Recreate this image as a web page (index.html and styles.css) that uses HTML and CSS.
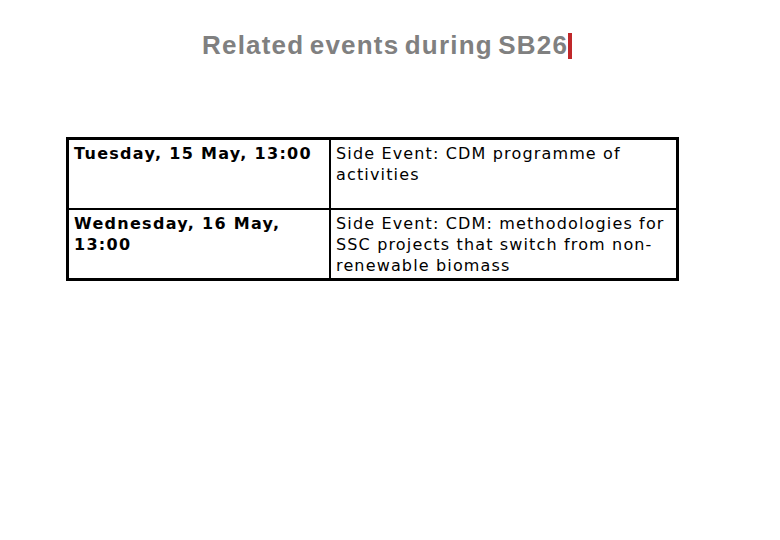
FILE: index.html
```html
<!DOCTYPE html>
<html>
<head>
<meta charset="utf-8">
<link rel="stylesheet" href="styles.css">
</head>
<body>
<div class="slide">
  <h1 class="title">Related events during SB26<span class="cursor"></span></h1>
  <table class="events">
    <tr class="row1">
      <td class="when">Tuesday, 15 May, 13:00</td>
      <td class="what">Side Event: CDM programme of activities</td>
    </tr>
    <tr class="row2">
      <td class="when">Wednesday, 16 May, 13:00</td>
      <td class="what">Side Event: CDM: methodologies for SSC projects that switch from non-renewable biomass</td>
    </tr>
  </table>
</div>
</body>
</html>
```

FILE: styles.css
```css
html, body {
  margin: 0;
  padding: 0;
  background: #ffffff;
}
.slide {
  width: 780px;
  height: 540px;
  position: relative;
  overflow: hidden;
}
.title {
  margin: 0;
  padding-top: 27px;
  padding-left: 202px;
  font-family: "Liberation Sans", Arial, sans-serif;
  font-weight: bold;
  font-size: 26px;
  line-height: 36px;
  letter-spacing: 1.2px;
  word-spacing: -3px;
  color: #808080;
  display: flex;
  align-items: center;
}
.cursor {
  display: inline-block;
  width: 4px;
  height: 26px;
  background: #c0282a;
  margin-left: 0;
  margin-top: 2px;
}
.events {
  margin-top: 74px;
  margin-left: 66px;
  width: 613px;
  border-collapse: collapse;
  border: 3px solid #000;
  font-family: "DejaVu Sans", Verdana, sans-serif;
  font-size: 16px;
  line-height: 21px;
  color: #000;
}
.events td {
  border: 2px solid #000;
  vertical-align: top;
  padding: 3px 4px 0 5px;
}
.row1 td { height: 65px; }
.row2 td { height: 65px; }
.when {
  width: 251px;
  font-weight: bold;
  letter-spacing: 1.3px;
}
.what {
  font-weight: normal;
  letter-spacing: 1.15px;
}
```
